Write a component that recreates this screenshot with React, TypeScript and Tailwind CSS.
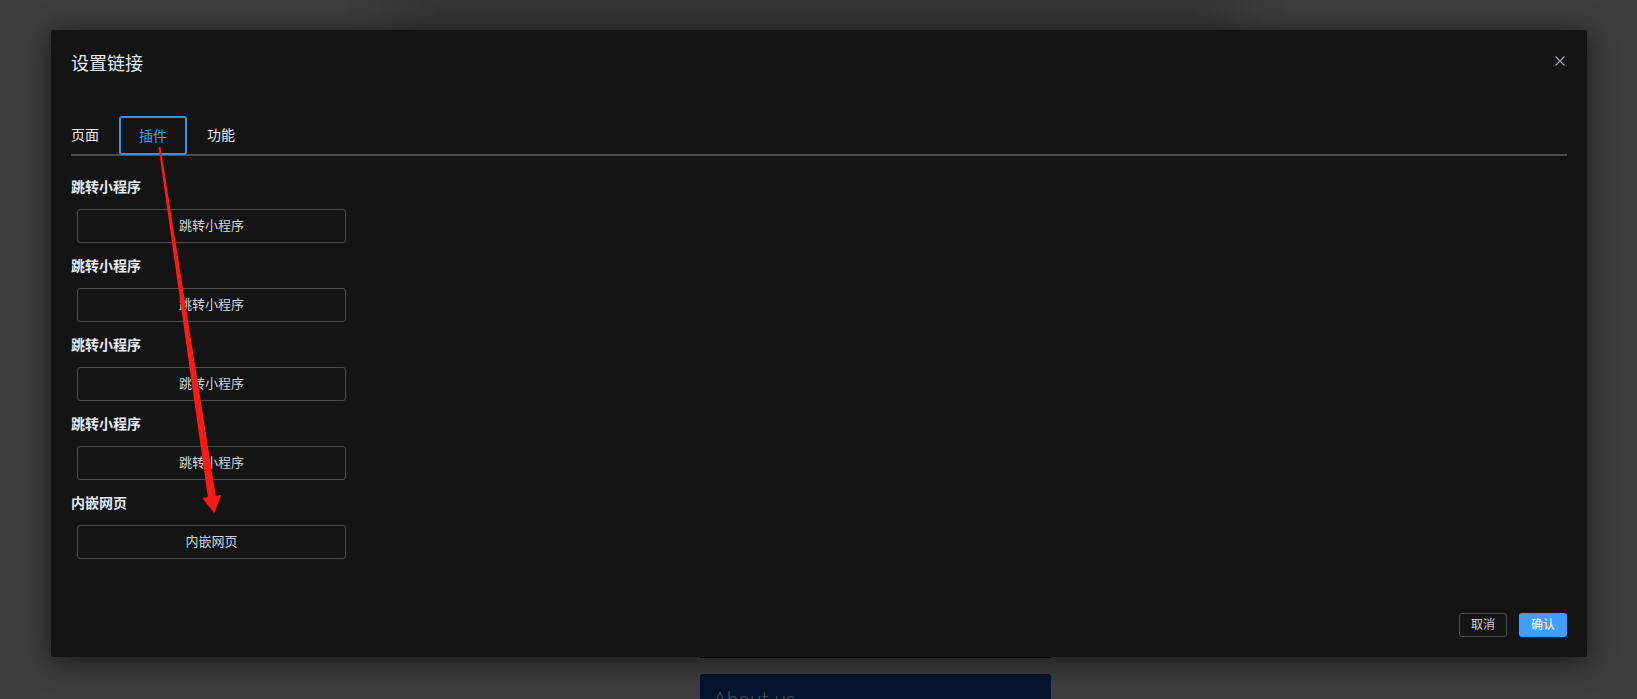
import React from 'react';

const font = "font-['Liberation_Sans','Noto_Sans_CJK_SC',sans-serif]";

const sections = [
  { label: '跳转小程序', button: '跳转小程序' },
  { label: '跳转小程序', button: '跳转小程序' },
  { label: '跳转小程序', button: '跳转小程序' },
  { label: '跳转小程序', button: '跳转小程序' },
  { label: '内嵌网页', button: '内嵌网页' },
];

export default function App() {
  return (
    <div className={`relative w-full h-[699px] overflow-hidden bg-[#3d3d3d] ${font}`}>
      {/* page behind the mask: soft shade of the header under the dialog */}
      <div className="absolute left-[395px] top-[-30px] w-[840px] h-[80px] bg-black/15 blur-xl" />
      <div className="pl-[700px] pt-[657px]">
        <div className="w-[351px]">
          <div className="h-px bg-black" />
          <div className="mt-[16px] h-[60px] rounded-[3px] bg-[#04162d] px-[13px] pt-[9px]">
            <span className="font-['Lato',sans-serif] text-[21px] font-light text-[#4e5663]">About us</span>
          </div>
        </div>
      </div>

      {/* dialog */}
      <div className="absolute left-[51px] top-[30px] w-[1536px] h-[627px] bg-[#141414] rounded-[2px] shadow-[0_4px_28px_rgba(0,0,0,0.6)] flex flex-col px-5">
        <div className="pt-[21px]">
          <h1 className="text-[18px] leading-[26px] text-[#e5eaf3]">设置链接</h1>
        </div>
        <button className="absolute right-[22px] top-[26px] w-[10px] h-[10px]">
          <svg width="10" height="10" viewBox="0 0 10 10">
            <path d="M0.5 0.5 L9.5 9.5 M9.5 0.5 L0.5 9.5" stroke="#a3a6ad" strokeWidth="1.2" />
          </svg>
        </button>

        {/* tabs */}
        <div className="mt-[39px] flex border-b-2 border-[#4c4d4f]">
          <div className="h-[38px] pt-px flex items-center pr-5 text-[14px] text-[#e5eaf3]">页面</div>
          <div className="h-[39px] -mb-px pt-px flex items-center px-[18px] text-[14px] text-[#409eff] border-2 border-[#3b8fe8] rounded-[3px]">插件</div>
          <div className="h-[38px] pt-px flex items-center pl-5 text-[14px] text-[#e5eaf3]">功能</div>
        </div>

        {/* plugin list */}
        <div className="mt-[21px]">
          {sections.map((s, i) => (
            <div key={i} className="mb-[13px]">
              <div className="text-[14px] leading-5 font-bold text-[#e5eaf3]">{s.label}</div>
              <div className="mt-3 ml-[6px] w-[269px] h-[34px] border border-[#4c4d4f] rounded-[3px] flex items-center justify-center text-[13px] text-[#cfd3dc]">
                {s.button}
              </div>
            </div>
          ))}
        </div>

        {/* footer */}
        <div className="mt-auto pb-5 flex justify-end gap-3">
          <button className="h-6 px-[11px] border border-[#4c4d4f] rounded-[3px] text-[12px] text-[#cfd3dc]">取消</button>
          <button className="h-6 px-[12px] bg-[#409eff] rounded-[3px] text-[12px] text-white">确认</button>
        </div>
      </div>

      {/* red annotation arrow */}
      <svg className="absolute left-0 top-0 pointer-events-none" width="1637" height="699">
        <polygon
          points="160.49,146.85 215.76,495.91 221.2,495.1 214.3,513.3 202.4,497.9 207.84,497.09 158.51,147.15"
          fill="#fe1a14"
        />
      </svg>
    </div>
  );
}
